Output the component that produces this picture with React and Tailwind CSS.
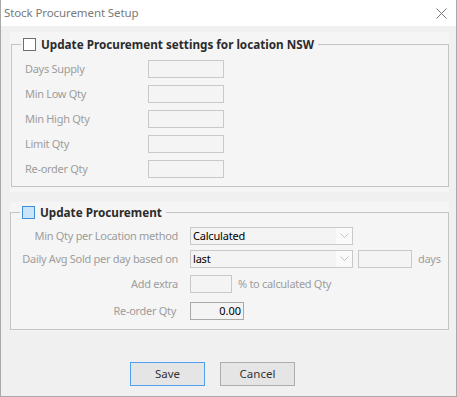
import React from 'react';

const LABEL = 'text-[11px] leading-[16px] tracking-[-0.3px] text-[#9d9d9d] whitespace-nowrap';
const BOX = 'h-[18px] border border-[#c9c9c9] bg-[#f4f4f4]';

function Chevron() {
  return (
    <svg width="9" height="6" viewBox="0 0 9 6">
      <path d="M0.5 0.5 L4.5 4.5 L8.5 0.5" fill="none" stroke="#c4c4c4" strokeWidth="1" />
    </svg>
  );
}

function Select({ value, className }) {
  return (
    <div className={`flex ${BOX} ${className}`}>
      <span className="flex-1 pl-[2px] text-[11px] leading-[16px] tracking-[-0.2px] text-black">{value}</span>
      <span className="w-[16px] flex items-center justify-center bg-[#fafafa]">
        <Chevron />
      </span>
    </div>
  );
}

function Checkbox({ checkedStyle }) {
  return (
    <span
      className={`w-[13px] h-[13px] border ${
        checkedStyle ? 'border-[#3d8fdb] bg-[#cce4f7]' : 'border-[#6f6f6f] bg-white'
      }`}
    />
  );
}

function Legend({ text, hover }) {
  return (
    <legend className="ml-[9px] pl-[2px] pr-[4px]">
      <div className="flex items-center gap-[5px] h-[16px]">
        <Checkbox checkedStyle={hover} />
        <span className="text-[11.7px] leading-[16px] font-bold text-[#2b2b2b]">{text}</span>
      </div>
    </legend>
  );
}

const SETTINGS = ['Days Supply', 'Min Low Qty', 'Min High Qty', 'Limit Qty', 'Re-order Qty'];

export default function App() {
  return (
    <div className="w-[457px] h-[397px] flex flex-col bg-[#f0f0f0] border-x border-b border-[#a9a9a9] font-['Noto_Sans',sans-serif]">
      {/* Title bar */}
      <div className="h-[26px] shrink-0 bg-white flex items-center justify-between pl-[3px] pr-[9px]">
        <span className="text-[11.5px] tracking-[-0.1px] text-[#7a7a7a]">Stock Procurement Setup</span>
        <svg width="11" height="11" viewBox="0 0 11 11">
          <path d="M0.5 0.5 L10.5 10.5 M10.5 0.5 L0.5 10.5" stroke="#777" strokeWidth="1" />
        </svg>
      </div>

      <div className="pl-[9px] pr-[7px]">
        {/* Location settings */}
        <div className="mt-[6px] bg-[#f5f5f5] pt-[4px] pb-[5px] pl-[1px]">
          <fieldset className="border border-[#c4c4c4] pb-[8px]">
            <Legend text="Update Procurement settings for location NSW" />
            <div className="mt-[8px] pl-[13px] flex flex-col gap-[7px]">
              {SETTINGS.map((label) => (
                <div key={label} className="flex items-center h-[18px]">
                  <span className={`${LABEL} w-[123px]`}>{label}</span>
                  <div className={`${BOX} w-[76px]`} />
                </div>
              ))}
            </div>
          </fieldset>
        </div>

        {/* Procurement */}
        <div className="mt-[10px] bg-[#f5f5f5] pt-[2px] pb-[1px]">
          <fieldset className="border border-[#c4c4c4] pb-[9px]">
            <Legend text="Update Procurement" hover />
            <div className="mt-[7px] flex items-center h-[18px]">
              <span className={`${LABEL} w-[167px] text-right`}>Min Qty per Location method</span>
              <Select value="Calculated" className="ml-[12px] w-[163px]" />
            </div>
            <div className="mt-[5px] flex items-center h-[18px]">
              <span className={`${LABEL} w-[167px] text-right`}>Daily Avg Sold per day based on</span>
              <Select value="last" className="ml-[12px] w-[163px]" />
              <div className={`${BOX} ml-[5px] w-[54px]`} />
              <span className={`${LABEL} ml-[6px]`}>days</span>
            </div>
            <div className="mt-[7px] flex items-center h-[18px]">
              <span className={`${LABEL} w-[167px] text-right`}>Add extra</span>
              <div className={`${BOX} ml-[12px] w-[42px]`} />
              <span className={`${LABEL} ml-[6px]`}>% to calculated Qty</span>
            </div>
            <div className="mt-[9px] flex items-center h-[18px]">
              <span className={`${LABEL} w-[165px] text-right`}>Re-order Qty</span>
              <div className="ml-[14px] w-[54px] h-[18px] border border-[#a9a9a9] bg-[#f4f4f4] text-right pr-[2px] text-[11px] leading-[16px] text-black">
                0.00
              </div>
            </div>
          </fieldset>
        </div>
      </div>

      {/* Buttons */}
      <div className="mt-[31px] pl-[129px] flex gap-[15px]">
        <button className="w-[75px] h-[24px] border border-[#4d9ff0] bg-[#e5e5e5] text-[11.5px] text-[#333]">
          Save
        </button>
        <button className="w-[75px] h-[24px] border border-[#adadad] bg-[#e5e5e5] text-[11.5px] text-[#333]">
          Cancel
        </button>
      </div>
    </div>
  );
}
